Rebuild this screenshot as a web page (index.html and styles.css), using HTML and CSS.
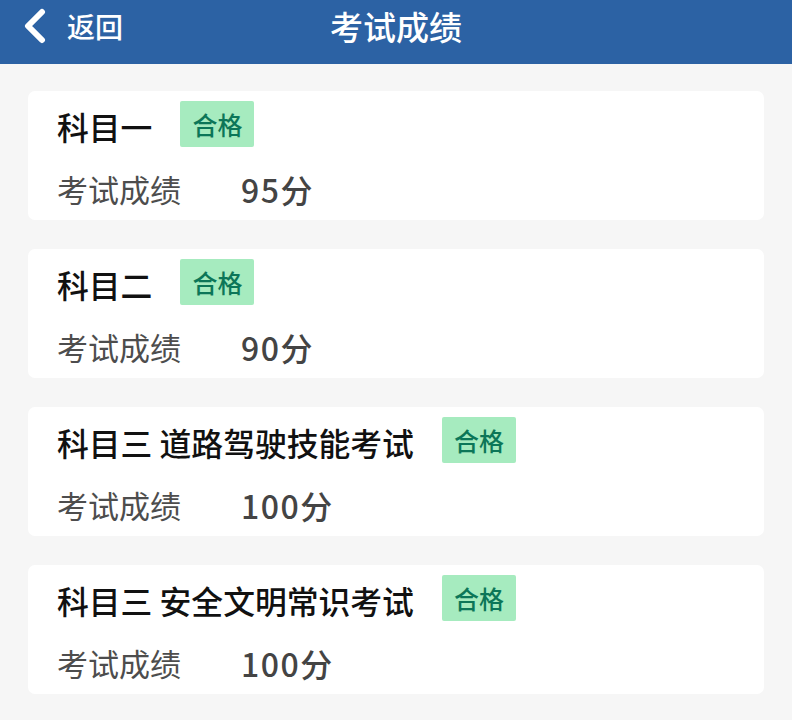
FILE: index.html
```html
<!DOCTYPE html>
<html lang="zh-CN">
<head>
<meta charset="utf-8">
<title>考试成绩</title>
<link rel="stylesheet" href="styles.css">
</head>
<body>
<header class="topbar">
  <div class="back">
    <svg class="chev" width="28" height="36" viewBox="0 0 28 36"><path d="M22 4 L8 18 L22 32" fill="none" stroke="#fff" stroke-width="6" stroke-linecap="round" stroke-linejoin="round"/></svg>
    <span class="back-text">返回</span>
  </div>
  <h1 class="title">考试成绩</h1>
</header>
<main class="list">
  <section class="card">
    <div class="row-title"><span class="subject">科目一</span><span class="badge">合格</span></div>
    <div class="row-score"><span class="label">考试成绩</span><span class="value">95分</span></div>
  </section>
  <section class="card">
    <div class="row-title"><span class="subject">科目二</span><span class="badge">合格</span></div>
    <div class="row-score"><span class="label">考试成绩</span><span class="value">90分</span></div>
  </section>
  <section class="card">
    <div class="row-title"><span class="subject">科目三 道路驾驶技能考试</span><span class="badge">合格</span></div>
    <div class="row-score"><span class="label">考试成绩</span><span class="value">100分</span></div>
  </section>
  <section class="card">
    <div class="row-title"><span class="subject">科目三 安全文明常识考试</span><span class="badge">合格</span></div>
    <div class="row-score"><span class="label">考试成绩</span><span class="value">100分</span></div>
  </section>
</main>
</body>
</html>
```
FILE: styles.css
```css
html, body {
  margin: 0;
  padding: 0;
}
body {
  background: #f6f6f6;
  font-family: "Noto Sans CJK SC", "Noto Sans", sans-serif;
  width: 792px;
  height: 720px;
  overflow: hidden;
}
.topbar {
  height: 64px;
  background: #2c62a4;
  position: relative;
  display: flex;
  align-items: center;
  justify-content: center;
}
.back {
  position: absolute;
  left: 20px;
  top: 0;
  height: 52px;
  display: flex;
  align-items: center;
}
.chev {
  display: block;
}
.back-text {
  color: #fff;
  font-size: 28px;
  line-height: 52px;
  margin-left: 19px;
  font-weight: 500;
}
.title {
  margin: 0;
  color: #fff;
  font-size: 33px;
  font-weight: 500;
  line-height: 52px;
  height: 52px;
  align-self: flex-start;
}
.list {
  padding: 27px 28px 0 28px;
  display: flex;
  flex-direction: column;
  gap: 29px;
}
.card {
  background: #fff;
  border-radius: 7px;
  height: 129px;
  box-sizing: border-box;
  padding: 10px 29px 0 29px;
}
.row-title {
  height: 46px;
  display: flex;
  align-items: center;
}
.subject {
  font-size: 31.8px;
  font-weight: 500;
  color: #111;
  line-height: 46px;
  margin-top: 4px;
}
.badge {
  margin-left: 28px;
  height: 46px;
  line-height: 46px;
  padding: 0 12px;
  background: #a6ebbf;
  color: #0c7658;
  font-size: 25px;
  font-weight: 500;
  border-radius: 2px;
}
.row-score {
  margin-top: 22px;
  height: 40px;
  display: flex;
  align-items: center;
}
.label {
  font-size: 31px;
  color: #4d4d4d;
  line-height: 40px;
}
.value {
  margin-left: 60px;
  font-size: 32px;
  color: #444;
  font-weight: 500;
  letter-spacing: 1.5px;
  line-height: 40px;
}
```
